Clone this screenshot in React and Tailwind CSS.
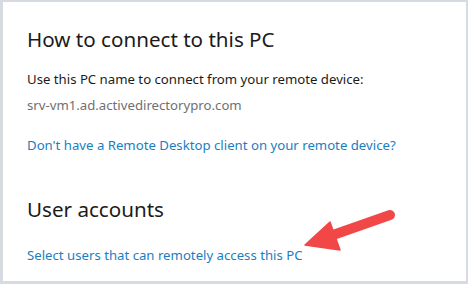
import React from "react";

const Arrow = () => (
  <svg className="absolute left-[296px] top-[200px]" width="100" height="56" viewBox="0 0 100 56">
    <line x1="91" y1="13" x2="34" y2="33" stroke="#f14747" strokeWidth="10" strokeLinecap="round" />
    <polygon points="6,43 31,20 41,48" fill="#f14747" strokeLinejoin="round" stroke="#f14747" strokeWidth="1.5" />
  </svg>
);

const App = () => {
  return (
    <div
      className="relative w-[468px] h-[284px] bg-white border-t-2 border-l-[3px] border-r-2 border-b-[3px] border-[#d6dae1] overflow-hidden"
      style={{ fontFamily: '"Noto Sans", "Open Sans", sans-serif' }}
    >
      <div className="pl-[24px] pt-[23px] flex flex-col">
        <h1 className="text-[20.6px] leading-[28px] text-[#1b1b1b]">How to connect to this PC</h1>
        <p className="mt-[16px] text-[13.2px] leading-[20px] text-[#1b1b1b]">
          Use this PC name to connect from your remote device:
        </p>
        <p className="mt-[6px] text-[13.2px] leading-[20px] text-[#707070]">srv-vm1.ad.activedirectorypro.com</p>
        <a className="mt-[20px] text-[13.2px] leading-[20px] text-[#1a7ec0]">
          Don't have a Remote Desktop client on your remote device?
        </a>
        <h2 className="mt-[40px] text-[20.6px] leading-[28px] text-[#1b1b1b]">User accounts</h2>
        <a className="mt-[22px] text-[13.2px] leading-[20px] text-[#1a7ec0]">
          Select users that can remotely access this PC
        </a>
      </div>
      <Arrow />
    </div>
  );
};

export default App;
